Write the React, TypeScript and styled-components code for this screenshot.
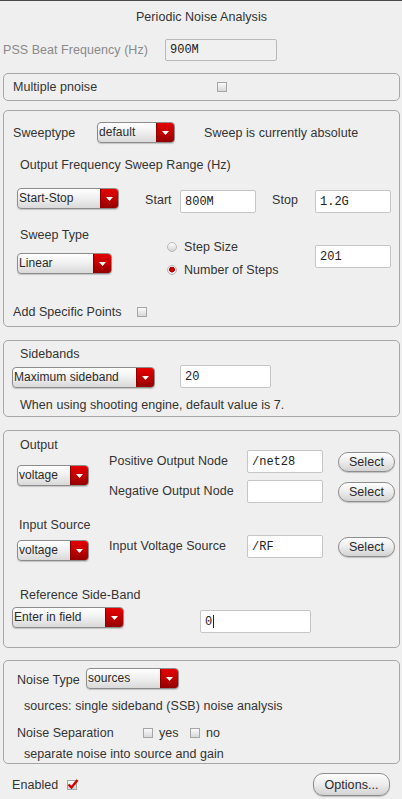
import React from "react";
import styled, { createGlobalStyle } from "styled-components";

const GlobalStyle = createGlobalStyle`
  html, body { margin: 0; padding: 0; background: #efefef; }
  body {
    font-family: "Liberation Sans", Arial, sans-serif;
    font-size: 12.5px;
    letter-spacing: 0.05px;
    color: #333;
  }
`;

const Page = styled.div`
  width: 402px;
  height: 799px;
  box-sizing: border-box;
  border-top: 1px solid #4a4a4a;
  padding: 0 2px 0 3px;
  display: flex;
  flex-direction: column;
  overflow: hidden;
`;

const Title = styled.div`
  flex: none;
  height: 32px;
  line-height: 32px;
  text-align: center;
`;

const Row = styled.div<{ $h: number; $mt?: number; $pl?: number; $top?: boolean }>`
  flex: none;
  display: flex;
  align-items: ${(p) => (p.$top ? "flex-start" : "center")};
  height: ${(p) => p.$h}px;
  margin-top: ${(p) => p.$mt ?? 0}px;
  padding-left: ${(p) => p.$pl ?? 0}px;
`;

const Split = styled.div<{ $h: number; $mt?: number; $pl?: number }>`
  flex: none;
  display: flex;
  align-items: flex-start;
  height: ${(p) => p.$h}px;
  margin-top: ${(p) => p.$mt ?? 0}px;
  padding-left: ${(p) => p.$pl ?? 0}px;
`;

const Col = styled.div<{ $w?: number; $pt?: number; $gap?: number }>`
  flex: none;
  display: flex;
  flex-direction: column;
  align-items: flex-start;
  width: ${(p) => (p.$w ? `${p.$w}px` : "auto")};
  padding-top: ${(p) => p.$pt ?? 0}px;
  gap: ${(p) => p.$gap ?? 0}px;
`;

const Label = styled.span<{ $w?: number; $muted?: boolean; $lh?: number; $ml?: number; $mt?: number }>`
  flex: none;
  white-space: nowrap;
  width: ${(p) => (p.$w ? `${p.$w}px` : "auto")};
  color: ${(p) => (p.$muted ? "#8a8a8a" : "#333")};
  line-height: ${(p) => (p.$lh ? `${p.$lh}px` : "16px")};
  margin-left: ${(p) => p.$ml ?? 0}px;
  margin-top: ${(p) => p.$mt ?? 0}px;
`;

const Spacer = styled.span<{ $w?: number }>`
  flex: ${(p) => (p.$w ? "none" : "1")};
  width: ${(p) => (p.$w ? `${p.$w}px` : "auto")};
`;

const Box = styled.div<{ $mt: number; $pb?: number; $h?: number }>`
  flex: none;
  display: flex;
  flex-direction: column;
  border: 1px solid #a7a7a7;
  border-radius: 5px;
  margin-top: ${(p) => p.$mt}px;
  padding-bottom: ${(p) => p.$pb ?? 0}px;
`;

/* ---------- dropdown ---------- */
const DropWrap = styled.div<{ $w: number; $mt?: number; $ml?: number }>`
  flex: none;
  box-sizing: border-box;
  width: ${(p) => p.$w}px;
  height: 21px;
  margin-top: ${(p) => p.$mt ?? 0}px;
  margin-left: ${(p) => p.$ml ?? 0}px;
  display: flex;
  border: 1px solid #8c8c8c;
  border-radius: 4px;
  overflow: hidden;
  background: linear-gradient(#ffffff 0%, #f1f1f1 45%, #d9d9d9 100%);
  box-shadow: 0 1px 1px rgba(0, 0, 0, 0.18);
`;

const DropText = styled.span`
  flex: 1;
  padding-left: 1px;
  font-size: 12px;
  line-height: 18px;
  white-space: nowrap;
  overflow: hidden;
  color: #2a2a2a;
`;

const DropArrow = styled.span`
  flex: none;
  width: 17px;
  display: flex;
  align-items: center;
  justify-content: center;
  background: linear-gradient(#e40000 0%, #c20000 50%, #930000 100%);
  border-left: 1px solid #8a0000;
`;

const Dropdown: React.FC<{ w: number; value: string; mt?: number; ml?: number }> = ({ w, value, mt, ml }) => (
  <DropWrap $w={w} $mt={mt} $ml={ml}>
    <DropText>{value}</DropText>
    <DropArrow>
      <svg width="7" height="4" viewBox="0 0 7 4">
        <polygon points="0,0 7,0 3.5,4" fill="#ffffff" />
      </svg>
    </DropArrow>
  </DropWrap>
);

/* ---------- text field ---------- */
const Field = styled.div<{ $w: number; $h?: number; $mt?: number; $disabled?: boolean }>`
  flex: none;
  box-sizing: border-box;
  width: ${(p) => p.$w}px;
  height: ${(p) => p.$h ?? 23}px;
  margin-top: ${(p) => p.$mt ?? 0}px;
  border: 1px solid ${(p) => (p.$disabled ? "#b9b9b9" : "#c6c6c6")};
  border-radius: 2px;
  background: ${(p) => (p.$disabled ? "#f0f0f0" : "#ffffff")};
  padding-left: 4px;
  display: flex;
  align-items: center;
  font-family: "Liberation Mono", "DejaVu Sans Mono", monospace;
  font-size: 12px;
  letter-spacing: 0;
  color: #222;
`;

const Caret = styled.span`
  display: inline-block;
  width: 1px;
  height: 13px;
  margin-left: 1px;
  background: #222;
`;

/* ---------- buttons ---------- */
const Pill = styled.div<{ $w: number; $h: number; $mt?: number }>`
  flex: none;
  box-sizing: border-box;
  width: ${(p) => p.$w}px;
  height: ${(p) => p.$h}px;
  margin-top: ${(p) => p.$mt ?? 0}px;
  border: 1px solid #8e8e8e;
  border-radius: 10px;
  background: linear-gradient(#fdfdfd 0%, #ececec 50%, #d3d3d3 100%);
  box-shadow: 0 1px 1px rgba(0, 0, 0, 0.2);
  display: flex;
  align-items: center;
  justify-content: center;
  color: #2a2a2a;
`;

/* ---------- checkbox / radio ---------- */
const CheckBox = styled.span`
  flex: none;
  position: relative;
  box-sizing: border-box;
  width: 10px;
  height: 10px;
  border: 1px solid #a5a5a5;
  background: linear-gradient(#fafafa, #d8d8d8);
`;

const CheckMark = styled.svg`
  position: absolute;
  left: -1px;
  top: -3px;
`;

const Check: React.FC<{ on?: boolean }> = ({ on }) => (
  <CheckBox>
    {on && (
      <CheckMark width="12" height="12" viewBox="0 0 12 12">
        <path d="M1.5 6.5 L4.5 9.5 L10.5 2" stroke="#d40000" strokeWidth="2.4" fill="none" />
      </CheckMark>
    )}
  </CheckBox>
);

const RadioDot = styled.span<{ $on?: boolean }>`
  flex: none;
  box-sizing: border-box;
  width: 10px;
  height: 10px;
  border-radius: 50%;
  border: 1px solid #b8b8b8;
  background: ${(p) =>
    p.$on
      ? "radial-gradient(circle at 50% 45%, #e00000 0, #b00000 2.6px, #f4f4f4 3.2px, #d0d0d0 100%)"
      : "linear-gradient(#ffffff, #d2d2d2)"};
  margin-right: 7px;
`;

const OptionRow = styled.div`
  display: flex;
  align-items: center;
  height: 16px;
`;

/* ---------- output node rows ---------- */
const NodeRow: React.FC<{ label: string; value: string }> = ({ label, value }) => (
  <Row $h={23} $top>
    <Label $w={138} $lh={23}>{label}</Label>
    <Field $w={76}>{value}</Field>
    <Spacer $w={15} />
    <Pill $w={57} $h={20} $mt={2}>Select</Pill>
  </Row>
);

export default function App() {
  return (
    <>
      <GlobalStyle />
      <Page>
        <Title>Periodic Noise Analysis</Title>

        <Row $h={22} $mt={6}>
          <Label $w={162} $muted>PSS Beat Frequency (Hz)</Label>
          <Field $w={112} $h={22} $disabled>900M</Field>
        </Row>

        <Box $mt={12}>
          <Row $h={26} $pl={9}>
            <Label $w={204}>Multiple pnoise</Label>
            <Check />
          </Row>
        </Box>

        <Box $mt={9} $pb={4}>
          <Row $h={21} $mt={11} $pl={9}>
            <Label $w={84}>Sweeptype</Label>
            <Dropdown w={78} value="default" />
            <Spacer $w={29} />
            <Label>Sweep is currently absolute</Label>
          </Row>
          <Row $h={20} $mt={12} $pl={16}>
            <Label>Output Frequency Sweep Range (Hz)</Label>
          </Row>
          <Row $h={25} $mt={13} $pl={13} $top>
            <Dropdown w={102} value="Start-Stop" />
            <Spacer $w={26} />
            <Label $w={35} $lh={25}>Start</Label>
            <Field $w={76} $mt={2}>800M</Field>
            <Spacer $w={16} />
            <Label $w={43} $lh={25}>Stop</Label>
            <Field $w={76} $mt={2}>1.2G</Field>
          </Row>
          <Split $h={49} $mt={12} $pl={13}>
            <Col $w={150}>
              <Label $lh={20} $ml={3}>Sweep Type</Label>
              <Dropdown w={95} mt={8} value="Linear" />
            </Col>
            <Col $w={148} $pt={14} $gap={7}>
              <OptionRow>
                <RadioDot />
                <Label>Step Size</Label>
              </OptionRow>
              <OptionRow>
                <RadioDot $on />
                <Label>Number of Steps</Label>
              </OptionRow>
            </Col>
            <Col $pt={20}>
              <Field $w={76}>201</Field>
            </Col>
          </Split>
          <Row $h={20} $mt={28} $pl={9}>
            <Label $w={124}>Add Specific Points</Label>
            <Check />
          </Row>
        </Box>

        <Box $mt={13} $pb={1}>
          <Row $h={20} $mt={3} $pl={16}>
            <Label>Sidebands</Label>
          </Row>
          <Row $h={23} $mt={1} $pl={8} $top>
            <Dropdown w={143} mt={2} value="Maximum sideband" />
            <Spacer $w={25} />
            <Field $w={91}>20</Field>
          </Row>
          <Row $h={20} $mt={7} $pl={16}>
            <Label>When using shooting engine, default value is 7.</Label>
          </Row>
        </Box>

        <Box $mt={13} $pb={14}>
          <Split $h={72}>
            <Col $w={105}>
              <Label $lh={20} $ml={16} $mt={4}>Output</Label>
              <Dropdown w={72} ml={13} mt={10} value="voltage" />
            </Col>
            <Col $pt={19} $gap={7}>
              <NodeRow label="Positive Output Node" value="/net28" />
              <NodeRow label="Negative Output Node" value="" />
            </Col>
          </Split>
          <Split $h={46} $mt={12}>
            <Col $w={105}>
              <Label $lh={20} $ml={15}>Input Source</Label>
              <Dropdown w={72} ml={13} mt={5} value="voltage" />
            </Col>
            <Col $pt={20}>
              <NodeRow label="Input Voltage Source" value="/RF" />
            </Col>
          </Split>
          <Row $h={20} $mt={24} $pl={16}>
            <Label>Reference Side-Band</Label>
          </Row>
          <Row $h={26} $mt={2} $pl={8} $top>
            <Dropdown w={112} value="Enter in field" />
            <Spacer $w={76} />
            <Field $w={111} $mt={3}>
              0<Caret />
            </Field>
          </Row>
        </Box>

        <Box $mt={12} $pb={1}>
          <Row $h={24} $mt={7} $pl={13} $top>
            <Label $w={69} $lh={24}>Noise Type</Label>
            <Dropdown w={93} value="sources" />
          </Row>
          <Row $h={16} $mt={6} $pl={20}>
            <Label>sources: single sideband (SSB) noise analysis</Label>
          </Row>
          <Row $h={16} $mt={11} $pl={13}>
            <Label $w={126}>Noise Separation</Label>
            <Check />
            <Spacer $w={6} />
            <Label $w={31}>yes</Label>
            <Check />
            <Spacer $w={6} />
            <Label>no</Label>
          </Row>
          <Row $h={16} $mt={5} $pl={20}>
            <Label>separate noise into source and gain</Label>
          </Row>
        </Box>

        <Row $h={23} $mt={9} $pl={9}>
          <Label $w={55}>Enabled</Label>
          <Check on />
          <Spacer />
          <Pill $w={77} $h={23}>Options...</Pill>
          <Spacer $w={10} />
        </Row>
      </Page>
    </>
  );
}
